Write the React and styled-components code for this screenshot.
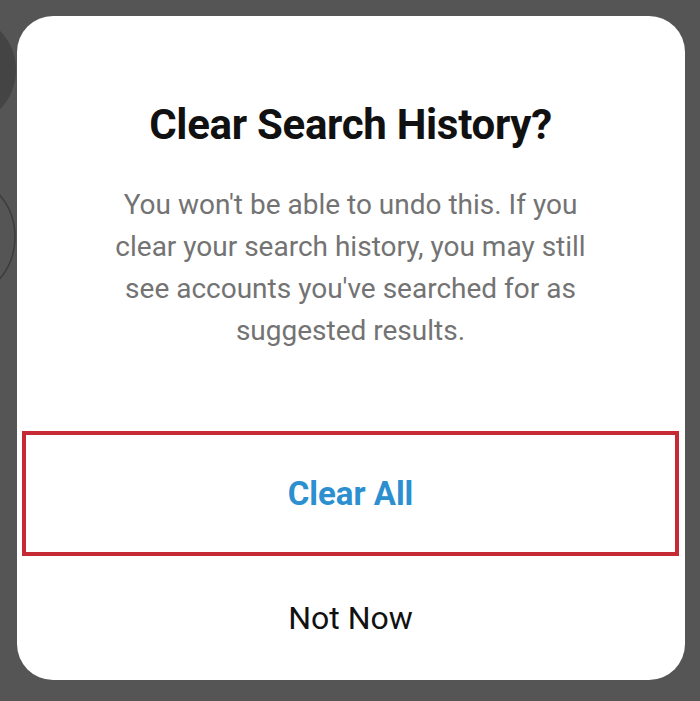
import React from 'react';
import styled, { createGlobalStyle } from 'styled-components';

const GlobalStyle = createGlobalStyle`
  html, body {
    margin: 0;
    padding: 0;
    background: #555555;
  }
  body {
    font-family: Roboto, 'Noto Sans', 'Liberation Sans', sans-serif;
  }
`;

const Screen = styled.div`
  position: relative;
  width: 700px;
  height: 701px;
  overflow: hidden;
  background: #555555;
  padding: 16px 15px 21px 17px;
  box-sizing: border-box;
`;

const Backdrop = styled.svg`
  position: absolute;
  left: 0;
  top: 0;
`;

const Dialog = styled.div`
  position: relative;
  height: 664px;
  background: #ffffff;
  border-radius: 36px;
  display: flex;
  flex-direction: column;
  align-items: stretch;
  padding: 0 6px 0 5px;
  box-sizing: border-box;
`;

const Title = styled.h1`
  margin: 84px 0 0;
  text-align: center;
  font-size: 42px;
  font-weight: 700;
  color: #111111;
  letter-spacing: -0.3px;
  line-height: 50px;
`;

const Message = styled.p`
  margin: 34px auto 0;
  width: 500px;
  text-align: center;
  font-size: 28px;
  line-height: 42px;
  color: #737373;
`;

const ActionButton = styled.button`
  display: flex;
  align-items: center;
  justify-content: center;
  background: transparent;
  font-family: inherit;
  border: ${({ $highlight }) => ($highlight ? '4px solid #c62a35' : 'none')};
  height: 126px;
  margin-top: ${({ $top }) => $top || 0}px;
  font-size: ${({ $primary }) => ($primary ? 33 : 32)}px;
  font-weight: ${({ $primary }) => ($primary ? 700 : 400)};
  color: ${({ $primary }) => ($primary ? '#2b8fd0' : '#111111')};
  cursor: pointer;
`;

export default function App() {
  return (
    <>
      <GlobalStyle />
      <Screen>
        <Backdrop width="20" height="320" viewBox="0 0 20 320">
          <circle cx="-40" cy="70" r="56" fill="#444444" />
          <circle cx="-50" cy="237" r="65" fill="none" stroke="#3c3c3c" strokeWidth="1.5" />
        </Backdrop>
        <Dialog>
          <Title>Clear Search History?</Title>
          <Message>
            You won't be able to undo this. If you clear your search history, you may still see
            accounts you've searched for as suggested results.
          </Message>
          <ActionButton $primary $highlight $top={79}>
            Clear All
          </ActionButton>
          <ActionButton>Not Now</ActionButton>
        </Dialog>
      </Screen>
    </>
  );
}
